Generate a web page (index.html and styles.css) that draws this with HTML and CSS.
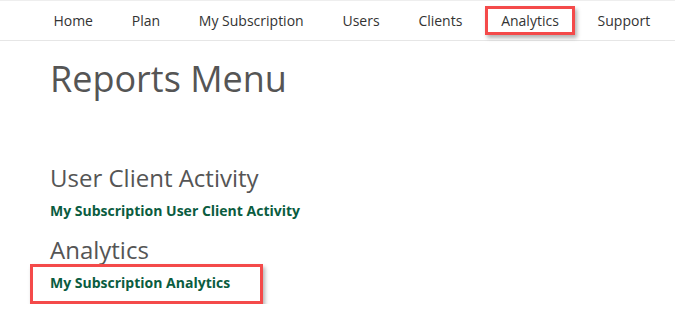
FILE: index.html
```html
<!DOCTYPE html>
<html lang="en">

<head>
    <meta charset="UTF-8">
    <meta name="viewport" content="width=device-width, initial-scale=1.0">
    <title>Reports Menu</title>
    <link rel="stylesheet" href="styles.css">
</head>

<body>
    <nav class="top-nav">
        <ul class="nav-list">
            <li><a href="#" class="nav-link">Home</a></li>
            <li><a href="#" class="nav-link">Plan</a></li>
            <li><a href="#" class="nav-link">My Subscription</a></li>
            <li><a href="#" class="nav-link">Users</a></li>
            <li><a href="#" class="nav-link">Clients</a></li>
            <li><a href="#" class="nav-link marked">Analytics</a></li>
            <li><a href="#" class="nav-link">Support</a></li>
        </ul>
    </nav>

    <div class="content">
        <h1>Reports Menu</h1>

        <div class="report-group first">
            <h2>User Client Activity</h2>
            <a href="#" class="report-link">My Subscription User Client Activity</a>
        </div>

        <div class="report-group">
            <h2>Analytics</h2>
            <div class="marked-box">
                <a href="#" class="report-link">My Subscription Analytics</a>
            </div>
        </div>
    </div>
</body>

</html>
```

FILE: styles.css
```css
body {
    font-family: "Open Sans", Arial, sans-serif;
    margin: 0;
    background: #fff;
    color: #555;
}

.top-nav {
    height: 39px;
    border-top: 1px solid #eee;
    border-bottom: 1px solid #e6e6e6;
}

.nav-list {
    list-style: none;
    margin: 0;
    padding: 0 0 0 34px;
    display: flex;
    align-items: center;
    height: 100%;
}

.nav-list li {
    flex-shrink: 0;
}

.nav-link {
    display: block;
    padding: 0 19.4px;
    font-size: 14px;
    line-height: 23px;
    color: #333;
    text-decoration: none;
    white-space: nowrap;
}

/* red highlight box from the screenshot */
.nav-link.marked {
    margin: 0 3px;
    padding: 0 13.4px;
    border: 3px solid #f44a4a;
    box-shadow: 2px 3px 4px rgba(0, 0, 0, 0.3);
}

.content {
    padding-left: 50px;
}

h1 {
    font-size: 36px;
    font-weight: 400;
    line-height: 1.2;
    margin: 16px 0 0;
    color: #555;
}

h2 {
    font-size: 24px;
    font-weight: 400;
    line-height: 1.2;
    margin: 0 0 6px;
    color: #555;
}

.report-group.first {
    margin-top: 64px;
}

.report-group + .report-group {
    margin-top: 15px;
}

.report-link {
    font-size: 14px;
    font-weight: 700;
    line-height: 20px;
    color: #0a5c40;
    text-decoration: none;
}

.marked-box {
    display: inline-block;
    margin: -7px 0 0 -20px;
    padding: 4px 30px 8px 17px;
    border: 3px solid #f44a4a;
    box-shadow: 2px 3px 4px rgba(0, 0, 0, 0.3);
}
```
